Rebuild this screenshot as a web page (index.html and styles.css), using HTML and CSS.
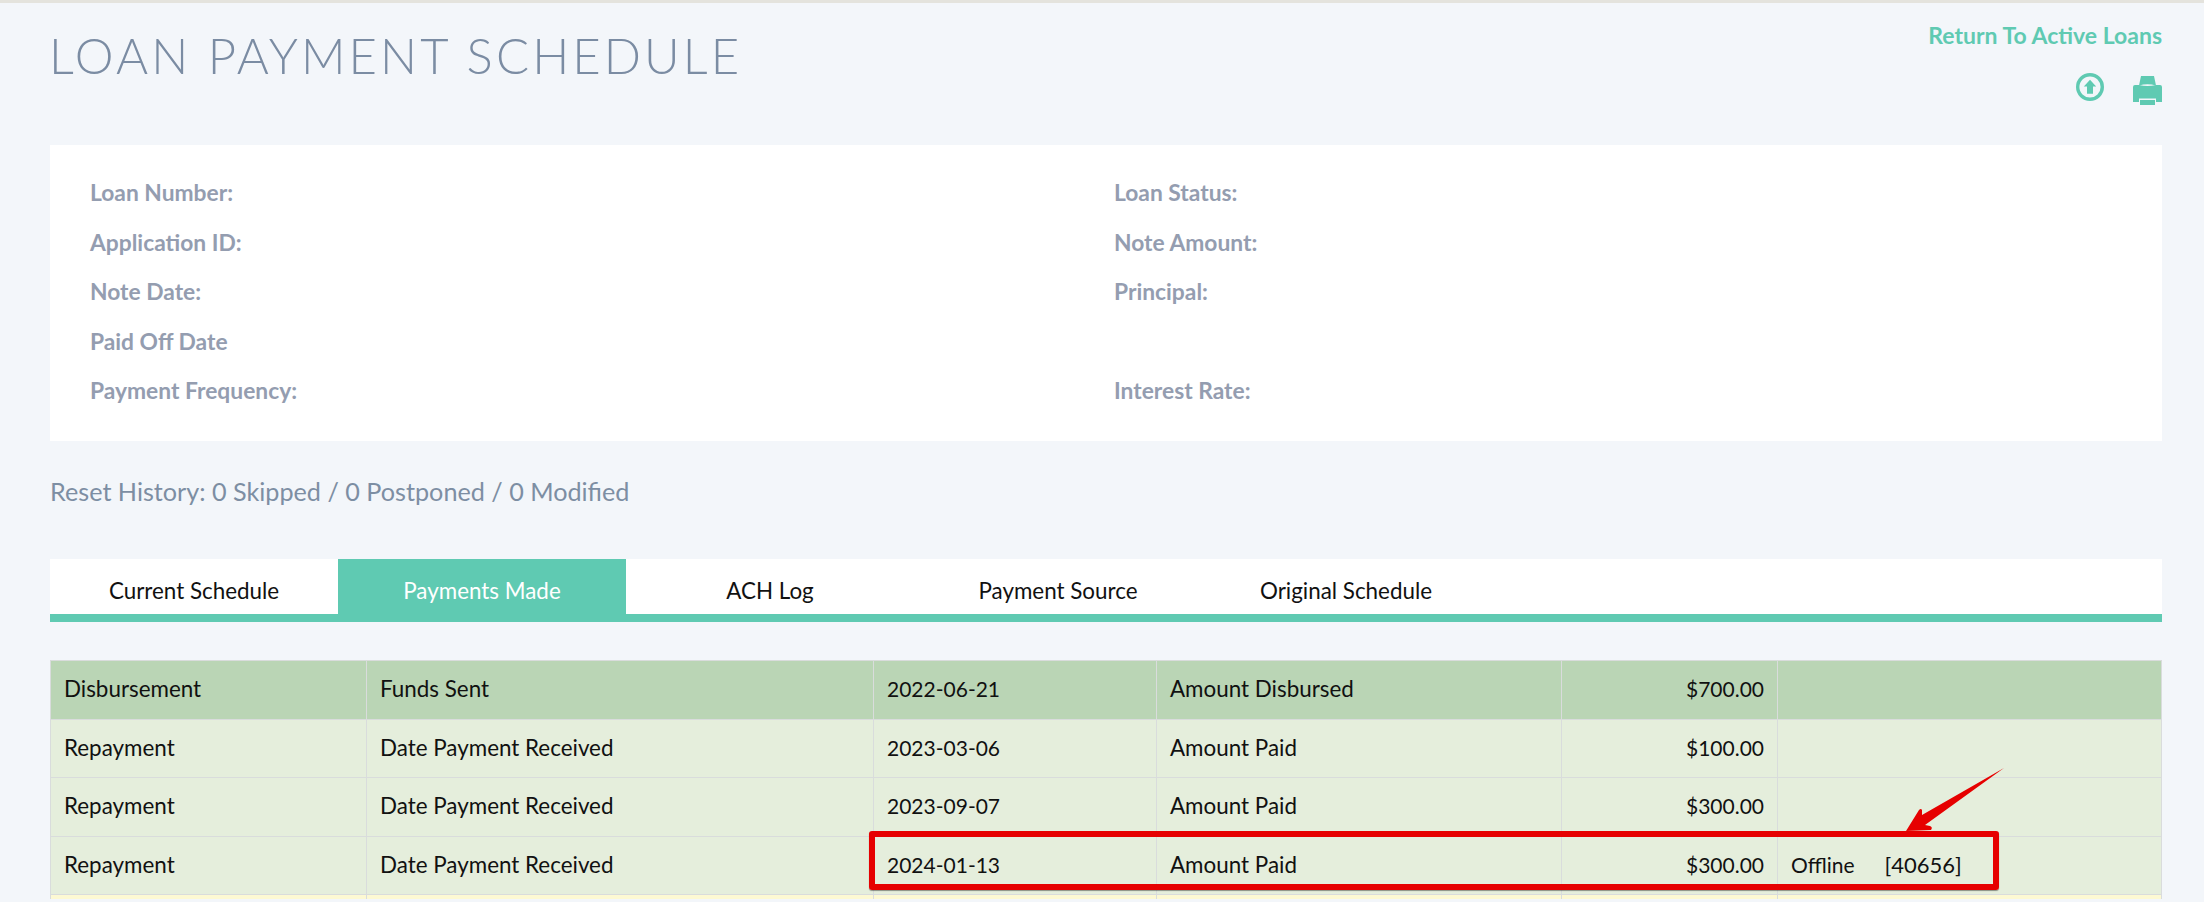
FILE: index.html
```html
<!DOCTYPE html>
<html lang="en">
<head>
  <meta charset="UTF-8">
  <title>Loan Payment Schedule</title>
  <link rel="stylesheet" href="styles.css">
</head>
<body>

<div class="page">
  <div class="header">
    <h1>LOAN PAYMENT SCHEDULE</h1>
    <div class="header-links">
      <a class="return-link">Return To Active Loans</a>
      <div class="header-icons">
        <svg class="icon-upload" viewBox="0 0 28 28" width="28" height="28">
          <circle cx="14" cy="14" r="12.3" fill="none" stroke="#5fcab2" stroke-width="3.4"/>
          <path d="M14 6.8L20.2 13.6H17V20.8H11V13.6H7.8z" fill="#5fcab2"/>
        </svg>
        <svg class="icon-print" viewBox="0 0 29 29" width="29" height="29">
          <path d="M8 0H21L23 9.5Q14.5 7 6 9.5z" fill="#5fcab2"/>
          <path d="M2 9H6Q14.5 11 23 9H27A2 2 0 0 1 29 11V26H23V22.5H6V26H0V11A2 2 0 0 1 2 9z" fill="#5fcab2"/>
          <path d="M7 24H22V29H7z" fill="#5fcab2"/>
        </svg>
      </div>
    </div>
  </div>

  <div class="info-panel">
    <div class="info-item">Loan Number:</div>
    <div class="info-item">Loan Status:</div>
    <div class="info-item">Application ID:</div>
    <div class="info-item">Note Amount:</div>
    <div class="info-item">Note Date:</div>
    <div class="info-item">Principal:</div>
    <div class="info-item">Paid Off Date</div>
    <div class="info-item"></div>
    <div class="info-item">Payment Frequency:</div>
    <div class="info-item">Interest Rate:</div>
  </div>

  <p class="reset-history">Reset History: 0 Skipped / 0 Postponed / 0 Modified</p>

  <div class="tabs">
    <div class="tab">Current Schedule</div>
    <div class="tab active">Payments Made</div>
    <div class="tab">ACH Log</div>
    <div class="tab">Payment Source</div>
    <div class="tab">Original Schedule</div>
  </div>

  <div class="table-wrap">
    <table class="payments">
      <colgroup>
        <col class="col-type">
        <col class="col-event">
        <col class="col-date">
        <col class="col-label">
        <col class="col-amount">
        <col>
      </colgroup>
      <tr class="disbursement">
        <td>Disbursement</td>
        <td>Funds Sent</td>
        <td class="num">2022-06-21</td>
        <td>Amount Disbursed</td>
        <td class="num amount">$700.00</td>
        <td></td>
      </tr>
      <tr class="repayment">
        <td>Repayment</td>
        <td>Date Payment Received</td>
        <td class="num">2023-03-06</td>
        <td>Amount Paid</td>
        <td class="num amount">$100.00</td>
        <td></td>
      </tr>
      <tr class="repayment">
        <td>Repayment</td>
        <td>Date Payment Received</td>
        <td class="num">2023-09-07</td>
        <td>Amount Paid</td>
        <td class="num amount">$300.00</td>
        <td></td>
      </tr>
      <tr class="repayment">
        <td>Repayment</td>
        <td>Date Payment Received</td>
        <td class="num">2024-01-13</td>
        <td>Amount Paid</td>
        <td class="num amount">$300.00</td>
        <td class="num"><span class="source">Offline</span><span class="source-id">[40656]</span></td>
      </tr>
      <tr class="pending">
        <td></td>
        <td></td>
        <td></td>
        <td></td>
        <td></td>
        <td></td>
      </tr>
    </table>

    <!-- annotation drawn on top of the screenshot -->
    <div class="red-box"></div>
    <svg class="red-arrow" viewBox="0 0 104 68" width="104" height="68">
      <path d="M101 2L19 49L19 44Q18 42 16 44L3 65L28 64Q30 61 27 60L22 59z" fill="#e60000"/>
    </svg>
  </div>
</div>

</body>
</html>
```

FILE: styles.css
```css
html, body { height: 902px; margin: 0; overflow: hidden; }
body { font-family: "Lato", "Open Sans", sans-serif; background-color: #f3f6fa; color: #111; border-top: 3px solid #e4e3dd; box-sizing: border-box; }
.page { padding: 0 42px 0 50px; }

.header { display: flex; justify-content: space-between; height: 142px; }
h1 { margin: 24px 0 0 -1px; font-size: 49px; font-weight: 300; line-height: 56px; letter-spacing: 3.1px; color: #7b8ca3; }
.header-links { display: flex; flex-direction: column; align-items: flex-end; padding-top: 20px; }
.return-link { color: #5fcab2; font-size: 23px; font-weight: 700; line-height: 24px; }
.header-icons { display: flex; align-items: flex-start; gap: 29px; margin-top: 26px; }
.icon-print { margin-top: 3px; }

.info-panel { display: grid; grid-template-columns: 1024px 1fr; grid-auto-rows: 49.6px; background-color: #fff; padding: 23px 40px 25px 40px; height: 248px; }
.info-item { color: #949db0; font-size: 22.8px; font-weight: 700; line-height: 49.6px; }

.reset-history { margin: 33px 0 0; height: 34px; font-size: 25.2px; line-height: 34px; color: #7d8ea3; }

.tabs { display: flex; margin-top: 51px; height: 55px; background-color: #fff; border-bottom: 8px solid #5fcab2; }
.tab { width: 288px; text-align: center; font-size: 22.4px; line-height: 64px; }
.tab.active { background-color: #5fcab2; color: #fff; }

.table-wrap { position: relative; margin-top: 38px; }
.payments { width: 100%; table-layout: fixed; border-collapse: collapse; font-size: 22.4px; }
.payments td { height: 55.5px; padding: 0 13px 2px; box-sizing: content-box; border: 1px solid #d9dcdc; }
.payments td.num { font-size: 21px; }
.payments .pending td { height: 4px; padding: 0 13px; border-bottom: 0; }
.col-type { width: 316px; }
.col-event { width: 507px; }
.col-date { width: 283px; }
.col-label { width: 405px; }
.col-amount { width: 216px; }
.disbursement td { background-color: #bad5b5; }
.repayment td { background-color: #e5eedc; }
.pending td { background-color: #fdf9d3; }
.amount { text-align: right; }
.source { margin-right: 30px; }
.source-id { font-size: 22px; }

.red-box { position: absolute; left: 819px; top: 171px; width: 1130px; height: 59px; box-sizing: border-box; border: 6.5px solid #e60000; border-radius: 3px; box-shadow: 0 1px 1px rgba(0, 0, 0, 0.4); }
.red-arrow { position: absolute; left: 1853px; top: 106px; }
```
